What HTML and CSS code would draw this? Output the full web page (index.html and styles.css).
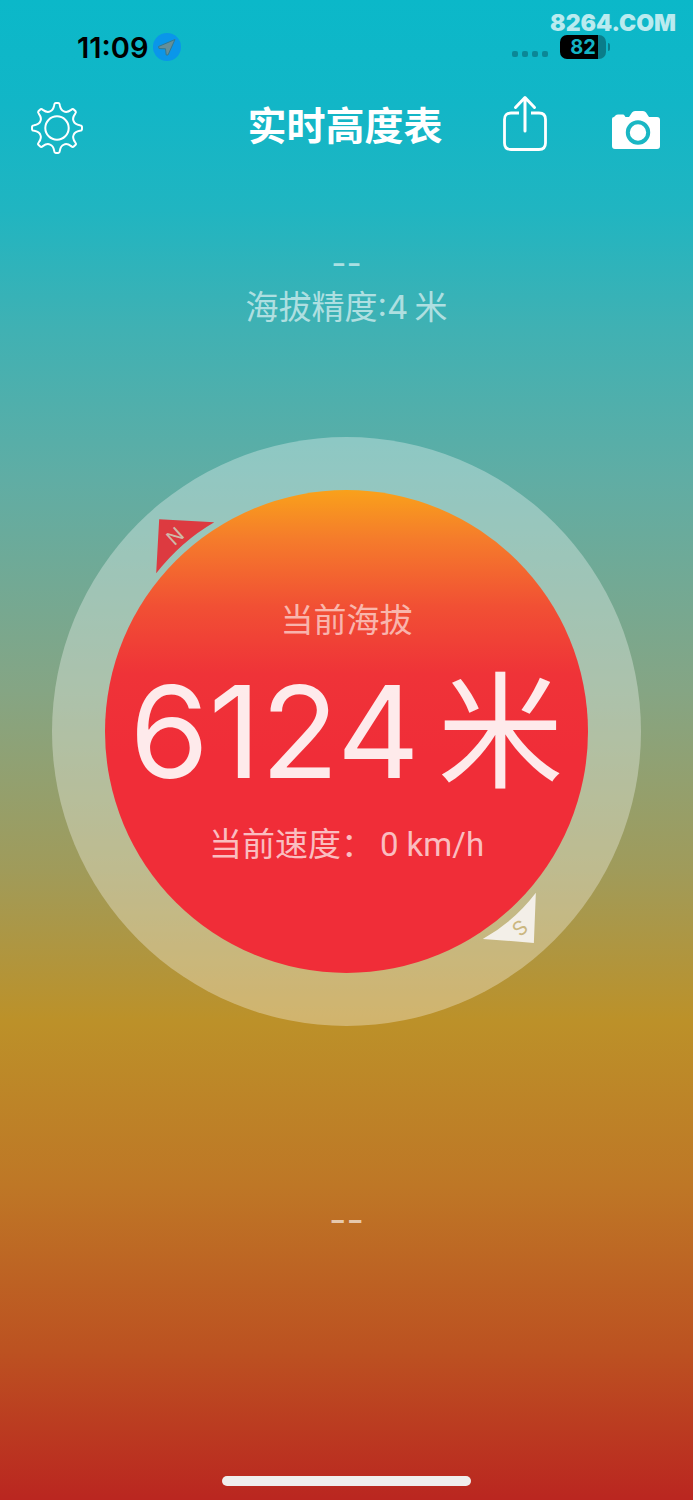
FILE: index.html
```html
<!DOCTYPE html>
<html lang="zh-CN">
<head>
    <meta charset="UTF-8">
    <meta name="viewport" content="width=device-width, initial-scale=1">
    <title>实时高度表</title>
    <link rel="stylesheet" href="styles.css">
</head>
<body>
<div class="watermark">8264.COM</div>
<div class="status">
    <div class="status-left">
        <span class="time">11:09</span>
        <svg class="location" viewBox="0 0 28 28">
            <circle cx="14" cy="14" r="14" fill="#0a96ea"/>
            <path d="M22 6.500L5.500 13.500L6 15.500L12.500 15.800L13.200 22L15 22Z" fill="#668f99" stroke="#35798f" stroke-width="1"/>
        </svg>
    </div>
    <div class="status-right">
        <div class="signal"><i></i><i></i><i></i><i></i></div>
        <div class="battery"><span>82</span></div>
    </div>
</div>
<header class="header">
    <button class="icon-btn" aria-label="设置">
        <svg width="54" height="54" viewBox="-27 -27 54 54" fill="none" stroke="#fff" stroke-width="2" stroke-linejoin="round">
            <circle r="11.700"/>
            <path id="gear"/>
        </svg>
    </button>
    <h1 class="title">实时高度表</h1>
    <div class="actions">
        <button class="icon-btn" aria-label="分享">
            <svg width="46" height="66" viewBox="0 0 46 66" fill="none" stroke="#fff" stroke-width="2.800" stroke-linecap="round" stroke-linejoin="round">
                <path stroke-linecap="butt" d="M17 18H9Q2.500 18 2.500 24.500V48Q2.500 54.500 9 54.500H37Q43.500 54.500 43.500 48V24.500Q43.500 18 37 18H29"/>
                <path d="M23 36V3M13.500 12.500L23 2.500L32.500 12.500" stroke-width="3"/>
            </svg>
        </button>
        <button class="icon-btn" aria-label="拍照">
            <svg width="48" height="34" viewBox="0 0 48 34" overflow="visible">
                <path d="M0 8Q0 6 2 6L4 4Q4.500 3.500 6 3.500H11Q12 3.500 12.500 4.500L13.500 6H17L20 1.500Q21 0 23 0H31Q33 0 34 1.500L37 6H45Q48 6 48 9V35Q48 38 45 38H3Q0 38 0 35Z" fill="#fff"/>
                <circle cx="26" cy="21.500" r="10.200" fill="none" stroke="#1ab7c4" stroke-width="4"/>
            </svg>
        </button>
    </div>
</header>
<section class="accuracy">
    <p>--</p>
    <p>海拔精度:4<span class="unit-small">米</span></p>
</section>
<main class="dial">
    <svg class="markers" viewBox="0 0 588 588">
        <path d="M107 82L162 85Q129 104 104 136Z" fill="#dd3a40"/>
        <text class="mark mark-n" x="123" y="106" transform="rotate(-42 123 99)">N</text>
        <path d="M483 455L481 505L430 501Q461 484 483 455Z" fill="#f3efe8"/>
        <text class="mark mark-s" x="467" y="497" transform="rotate(138 467 490)">S</text>
    </svg>
    <div class="dial-face">
        <p class="label">当前海拔</p>
        <p class="altitude">6124<span class="unit">米</span></p>
        <p class="speed">当前速度：<span class="speed-value">0 km/h</span></p>
    </div>
</main>
<p class="place">--</p>
<div class="home-bar"></div>
<script>
    // gear outline: eight rounded teeth around the centre
    const gear = document.querySelector('#gear')
    const teeth = 8
    let d = ''
    function point(r, deg) {
        const a = (deg - 90) * Math.PI / 180
        return (r * Math.cos(a)).toFixed(2) + ' ' + (r * Math.sin(a)).toFixed(2)
    }
    for (let i = 0; i < teeth; i++) {
        const c = i * 360 / teeth
        d += (i ? 'L' : 'M') + point(23, c - 7)
        d += 'Q' + point(25, c - 6) + ' ' + point(25, c - 3)
        d += 'L' + point(25, c + 3)
        d += 'Q' + point(25, c + 6) + ' ' + point(23, c + 7)
        d += 'C' + point(19.5, c + 10) + ' ' + point(18, c + 15) + ' ' + point(18, c + 22.5)
        d += 'C' + point(18, c + 30) + ' ' + point(19.5, c + 35) + ' ' + point(23, c + 38)
    }
    gear.setAttribute('d', d + 'Z')
</script>
</body>
</html>
```
FILE: styles.css
```css
* {
    box-sizing: border-box;
}
body {
    display: flex;
    flex-direction: column;
    margin: 0;
    min-height: 100vh;
    font-family: Inter, "Noto Sans CJK SC", sans-serif;
    color: white;
    background: linear-gradient(#0bb8c9 0%, #12b6c7 7%, #20b5c1 14%, #40b1b3 22%, #60ada4 32%, #85a584 46%, #a09b5a 58%, #bc9129 68%, #be7726 79%, #bc5221 90%, #ba2620 100%);
}
p, h1 {
    margin: 0;
}
.watermark {
    position: absolute;
    top: 8px;
    right: 17px;
    font-family: Inter, sans-serif;
    font-size: 23px;
    font-weight: 900;
    line-height: 30px;
    color: rgba(255, 255, 255, .72);
}

.status {
    display: flex;
    justify-content: space-between;
    align-items: flex-end;
    height: 64px;
    padding: 0 87px 0 77px;
    color: black;
}
.status-left, .status-right {
    display: flex;
    align-items: center;
    height: 34px;
}
.status-left {
    gap: 5px;
}
.status-right {
    gap: 12px;
}
.time {
    font-size: 29px;
    font-weight: 600;
}
.location {
    width: 28px;
    height: 28px;
}
.signal {
    display: flex;
    gap: 4px;
    padding-top: 14px;
}
.signal i {
    width: 6px;
    height: 6px;
    border-radius: 2px;
    background-color: #0b8796;
}
.battery {
    position: relative;
    width: 46px;
    height: 24px;
    border-radius: 7px;
    background: linear-gradient(to right, black 82%, #0a7d8a 82%);
    font-size: 20px;
    font-weight: 700;
    line-height: 24px;
    text-align: center;
    color: #14b4c5;
}
.battery::after {
    content: "";
    position: absolute;
    top: 8px;
    right: -4px;
    width: 2px;
    height: 8px;
    border-radius: 0 2px 2px 0;
    background-color: #0a7d8a;
}

.header {
    display: grid;
    grid-template-columns: 1fr auto 1fr;
    align-items: center;
    height: 127px;
    padding: 0 33px 0 30px;
}
.icon-btn {
    display: flex;
    justify-self: start;
    padding: 0;
    border: none;
    background: none;
    cursor: pointer;
}
.title {
    font-size: 39px;
    font-weight: 600;
    line-height: 54px;
    padding-bottom: 4px;
}
.actions {
    display: flex;
    justify-content: flex-end;
    align-items: center;
    gap: 64px;
}

.accuracy {
    padding-top: 50px;
    height: 246px;
    font-size: 33px;
    line-height: 44px;
    text-align: center;
    color: rgba(255, 255, 255, .6);
}
.unit-small {
    margin-left: 6px;
}

.dial {
    position: relative;
    align-self: center;
    width: 85%;
    aspect-ratio: 1;
    padding: 53px;
    border-radius: 50%;
    background-color: rgba(255, 255, 255, .32);
}
.markers {
    position: absolute;
    inset: 0;
}
.mark {
    font-size: 20px;
    text-anchor: middle;
}
.mark-n {
    fill: #cfb9a9;
}
.mark-s {
    fill: #cbb77f;
}
.dial-face {
    display: flex;
    flex-direction: column;
    align-items: center;
    height: 100%;
    padding-top: 106px;
    border-radius: 50%;
    background: linear-gradient(#f9a11b 0%, #f57c2b 10%, #f15034 24%, #ef3338 38%, #f02d38 55%, #f02d38 100%);
    white-space: nowrap;
}
.label, .speed {
    font-size: 33px;
    line-height: 48px;
}
.label {
    color: rgba(255, 255, 255, .6);
}
.speed {
    color: rgba(255, 255, 255, .7);
}
.speed-value {
    margin-left: 6px;
    font-family: Roboto, sans-serif;
}
.altitude {
    display: flex;
    align-items: center;
    gap: 18px;
    height: 176px;
    font-size: 128px;
    line-height: 176px;
    color: rgba(255, 255, 255, .9);
}
.unit {
    font-size: 126px;
}
.place {
    padding-top: 168px;
    font-size: 38px;
    line-height: 50px;
    text-align: center;
    color: rgba(255, 255, 255, .65);
}
.home-bar {
    align-self: center;
    width: 36%;
    height: 10px;
    margin: auto 0 14px;
    border-radius: 5px;
    background-color: #f0eeed;
}
```
